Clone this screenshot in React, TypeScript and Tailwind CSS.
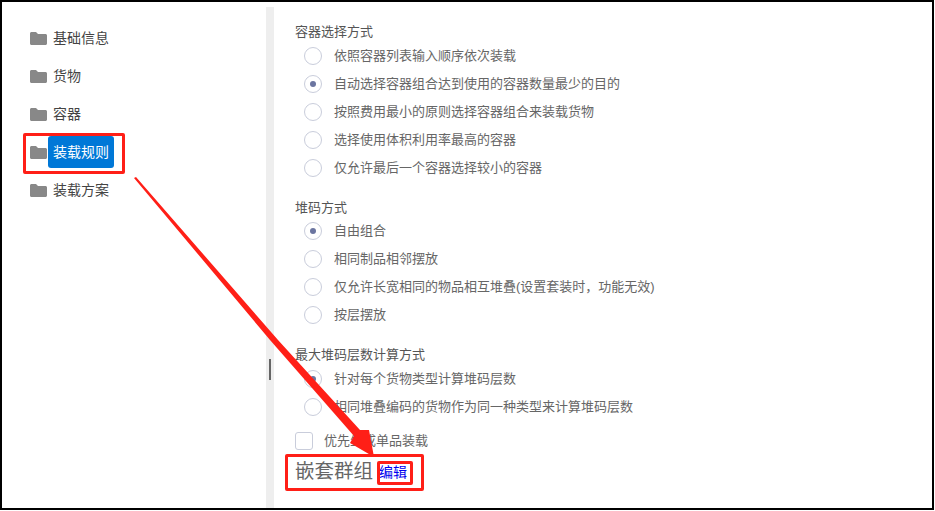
const navItems = ['基础信息', '货物', '容器', '装载规则', '装载方案']

function Folder() {
  return (
    <svg width="17" height="13" viewBox="0 0 17 13" className="shrink-0">
      <path d="M0 1.5C0 .7.7 0 1.5 0H6l2 2h7.500c.8 0 1.500.7 1.500 1.500v8c0 .8-.7 1.500-1.500 1.500h-14C.7 13 0 12.300 0 11.500z" fill="#888888" />
    </svg>
  )
}

function NavItem({ label, active }: { label: string; active?: boolean }) {
  return (
    <div className="flex h-[38px] items-center">
      <Folder />
      <span className={active ? 'ml-[1px] flex h-8 w-[66px] items-center justify-center rounded-[3px] bg-[#0078d7] text-[14px] text-white' : 'ml-[6px] text-[14px] text-[#444444]'}>
        {label}
      </span>
    </div>
  )
}

function Radio({ label, checked }: { label: string; checked?: boolean }) {
  return (
    <div className="flex h-7 items-center pl-[9px]">
      <span className="flex h-[18px] w-[18px] shrink-0 items-center justify-center rounded-full border border-[#c9cddb] bg-white">
        {checked && <span className="h-[6px] w-[6px] rounded-full bg-[#6b75a0]" />}
      </span>
      <span className="ml-[12px] text-[13px] text-[#666666]">{label}</span>
    </div>
  )
}

function Group({ title, options, checked, className, listClass = 'mt-[1px]' }: { title: string; options: string[]; checked: number; className?: string; listClass?: string }) {
  return (
    <div className={className}>
      <div className="flex h-[18px] items-center text-[13px] text-[#555555]">{title}</div>
      <div className={listClass}>
        {options.map((o, i) => (
          <Radio key={o} label={o} checked={i === checked} />
        ))}
      </div>
    </div>
  )
}

export default function App() {
  return (
    <div className="relative flex h-[510px] w-[934px] overflow-hidden border-2 border-black bg-white">
      <div className="flex h-full w-full font-['Liberation_Sans','Noto_Sans_CJK_SC',sans-serif]">
        <aside className="w-[264px] shrink-0 pl-[28px] pt-[17px]">
          {navItems.map((n) => (
            <NavItem key={n} label={n} active={n === '装载规则'} />
          ))}
        </aside>

        <div className="relative mt-[5px] w-2 shrink-0 bg-[#eeeeee]">
          <div className="absolute left-[3px] top-[352px] h-[21px] w-[2px] bg-[#666666]" />
        </div>

        <main className="flex-1 pl-[21px] pt-[21px]">
          <Group
            title="容器选择方式"
            checked={1}
            options={['依照容器列表输入顺序依次装载', '自动选择容器组合达到使用的容器数量最少的目的', '按照费用最小的原则选择容器组合来装载货物', '选择使用体积利用率最高的容器', '仅允许最后一个容器选择较小的容器']}
          />
          <Group
            className="mt-[17px]"
            listClass="mt-0"
            title="堆码方式"
            checked={0}
            options={['自由组合', '相同制品相邻摆放', '仅允许长宽相同的物品相互堆叠(设置套装时，功能无效)', '按层摆放']}
          />
          <Group
            className="mt-[17px]"
            title="最大堆码层数计算方式"
            checked={0}
            options={['针对每个货物类型计算堆码层数', '相同堆叠编码的货物作为同一种类型来计算堆码层数']}
          />
          <div className="mt-[10px] flex h-[20px] items-center">
            <span className="h-[18px] w-[18px] rounded-[3px] border border-[#c9cddb] bg-white" />
            <span className="ml-[11px] text-[13px] text-[#666666]">优先生成单品装载</span>
          </div>
          <div className="mt-[6px] flex h-[30px] items-center">
            <span className="text-[19.500px] text-[#666666]">嵌套群组</span>
            <span className="ml-[6px] text-[14px] text-[#0000ee]">编辑</span>
          </div>
        </main>
      </div>

      {/* annotations */}
      <div className="absolute left-[21px] top-[131px] h-[41px] w-[102px] rounded-[2px] border-[3px] border-[#ff1f17]" />
      <div className="absolute left-[283px] top-[452px] h-[37px] w-[139px] rounded-[2px] border-[3px] border-[#ff1f17]" />
      <div className="absolute left-[375px] top-[459px] h-[24px] w-[36px] rounded-[2px] border-[3px] border-[#ff1f17]" />
      <svg className="pointer-events-none absolute left-[-2px] top-[-2px]" width="934" height="510">
        <polygon points="134,178 136,177 278,340 360,430 369,430 374,457 350,443 354,436 270,340" fill="#ff1f17" />
      </svg>
    </div>
  )
}
